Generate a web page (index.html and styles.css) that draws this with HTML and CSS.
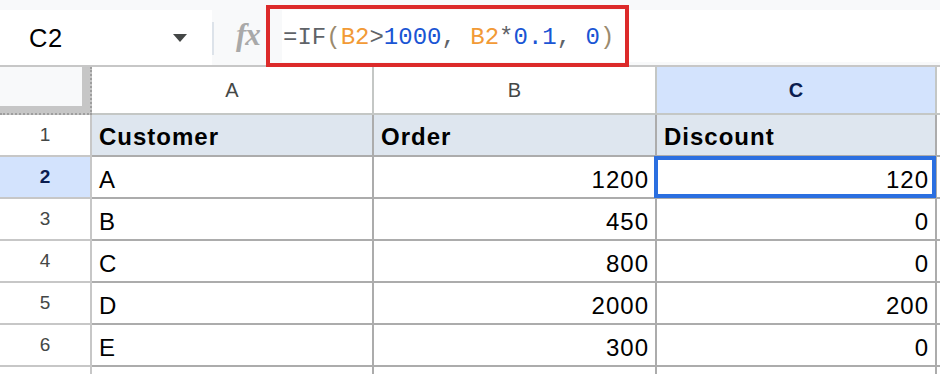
FILE: index.html
```html
<!DOCTYPE html>
<html>
<head>
<meta charset="utf-8">
<link rel="stylesheet" href="styles.css">
</head>
<body>
<div class="app">
  <div class="toolbar">
    <div class="namebox">
      <span class="ref">C2</span>
      <svg class="caret" width="14" height="8" viewBox="0 0 14 8"><path d="M0 0h14L7 8z" fill="#444746"/></svg>
    </div>
    <div class="sep"></div>
    <div class="fx">fx</div>
    <div class="input"><span class="fg">=IF</span><span class="pr">(</span><span class="rf">B2</span><span class="fg">&gt;</span><span class="nm">1000</span><span class="fg">, </span><span class="rf">B2</span><span class="fg">*</span><span class="nm">0.1</span><span class="fg">, </span><span class="nm">0</span><span class="pr">)</span></div>
    <div class="highlight"></div>
  </div>
  <div class="grid">
    <div class="corner"><div class="corner-fill"></div></div>
    <div class="colh">A</div>
    <div class="colh">B</div>
    <div class="colh sel">C</div>
    <div class="colh rest"></div>

    <div class="rowh">1</div>
    <div class="cell hd">Customer</div>
    <div class="cell hd">Order</div>
    <div class="cell hd">Discount</div>
    <div class="cell rest"></div>

    <div class="rowh sel">2</div>
    <div class="cell">A</div>
    <div class="cell num">1200</div>
    <div class="cell num active">120</div>
    <div class="cell rest"></div>

    <div class="rowh">3</div>
    <div class="cell">B</div>
    <div class="cell num">450</div>
    <div class="cell num">0</div>
    <div class="cell rest"></div>

    <div class="rowh">4</div>
    <div class="cell">C</div>
    <div class="cell num">800</div>
    <div class="cell num">0</div>
    <div class="cell rest"></div>

    <div class="rowh">5</div>
    <div class="cell">D</div>
    <div class="cell num">2000</div>
    <div class="cell num">200</div>
    <div class="cell rest"></div>

    <div class="rowh">6</div>
    <div class="cell">E</div>
    <div class="cell num">300</div>
    <div class="cell num">0</div>
    <div class="cell rest"></div>

    <div class="rowh"></div>
    <div class="cell"></div>
    <div class="cell"></div>
    <div class="cell"></div>
    <div class="cell rest"></div>
  </div>
</div>
</body>
</html>
```
FILE: styles.css
```css
* { box-sizing: border-box; }
html, body { margin: 0; padding: 0; }
body {
  width: 940px;
  height: 374px;
  overflow: hidden;
  background: #ffffff;
  font-family: "Liberation Sans", Arial, sans-serif;
}
.app { position: relative; width: 940px; }

.toolbar {
  position: relative;
  display: flex;
  height: 67px;
  background: #f8f9fa;
  border-bottom: 2px solid #c7c7c7;
}
.namebox {
  width: 212px;
  margin-top: 10px;
  height: 55px;
  background: #ffffff;
  display: flex;
  align-items: center;
  padding-left: 29px;
  padding-right: 25px;
  justify-content: space-between;
}
.ref { font-size: 25.5px; color: #000; letter-spacing: 0.5px; margin-top: 2px; }
.caret { margin-top: 1px; }
.sep {
  width: 2px;
  height: 33px;
  margin-top: 22px;
  background: #dde3ea;
}
.fx {
  width: 57px;
  padding-left: 22px;
  padding-top: 17px;
  font-family: "Liberation Serif", "Times New Roman", serif;
  font-style: italic;
  font-weight: bold;
  font-size: 31px;
  color: #a9a9a9;
  letter-spacing: -1px;
}
.input {
  flex: 1;
  margin-top: 10px;
  height: 52px;
  background: #ffffff;
  margin-left: 11px;
  padding-left: 1px;
  padding-top: 3px;
  font-family: "Liberation Mono", "DejaVu Sans Mono", monospace;
  font-size: 24px;
  line-height: 50px;
  white-space: nowrap;
}
.fg { color: #5f6368; }
.pr { color: #9a8a6e; }
.rf { color: #f29a36; }
.nm { color: #1a55d4; }
.highlight {
  position: absolute;
  left: 266px;
  top: 5px;
  width: 363px;
  height: 62px;
  border: 4px solid #dc2a2a;
}

.grid {
  display: grid;
  grid-template-columns: 92px 282px 283px 280px 3px;
  grid-template-rows: 48px repeat(6, 42px) 20px;
}
.corner {
  background: #c6c6c6;
  border-right: 2px dotted #9e9e9e;
  border-bottom: 2px dotted #9e9e9e;
}
.corner-fill {
  width: 82px;
  height: 39px;
  background: #f8f9fa;
}
.colh {
  background: #ffffff;
  border-right: 2px solid #c4c7c5;
  border-bottom: 2px solid #c4c7c5;
  display: flex;
  align-items: center;
  justify-content: center;
  font-size: 20px;
  color: #444746;
  padding-top: 1px;
}
.colh.sel {
  background: #d3e3fd;
  color: #0b1d4f;
  font-weight: bold;
}
.colh.rest { border-right: none; }
.rowh {
  background: #ffffff;
  border-right: 2px solid #c7c7c7;
  border-bottom: 2px solid #c7c7c7;
  display: flex;
  align-items: center;
  justify-content: center;
  font-size: 19px;
  color: #444746;
}
.rowh.sel {
  background: #d3e3fd;
  color: #0b1d4f;
  font-weight: bold;
}
.cell {
  position: relative;
  border-right: 2px solid #acacac;
  border-bottom: 2px solid #acacac;
  font-size: 24px;
  letter-spacing: 1px;
  line-height: 34px;
  padding: 6px 6px 0 7px;
  color: #000;
  white-space: nowrap;
}
.cell.hd {
  background: #dee6ef;
  font-weight: bold;
  padding-top: 5px;
}
.cell.num { text-align: right; padding-right: 6px; }
.cell.rest { border-right: none; padding: 0; }
.cell.active::after {
  content: "";
  position: absolute;
  left: -3px;
  top: -1px;
  right: -1px;
  bottom: -1px;
  border: 4px solid #2b6fe0;
}
```
